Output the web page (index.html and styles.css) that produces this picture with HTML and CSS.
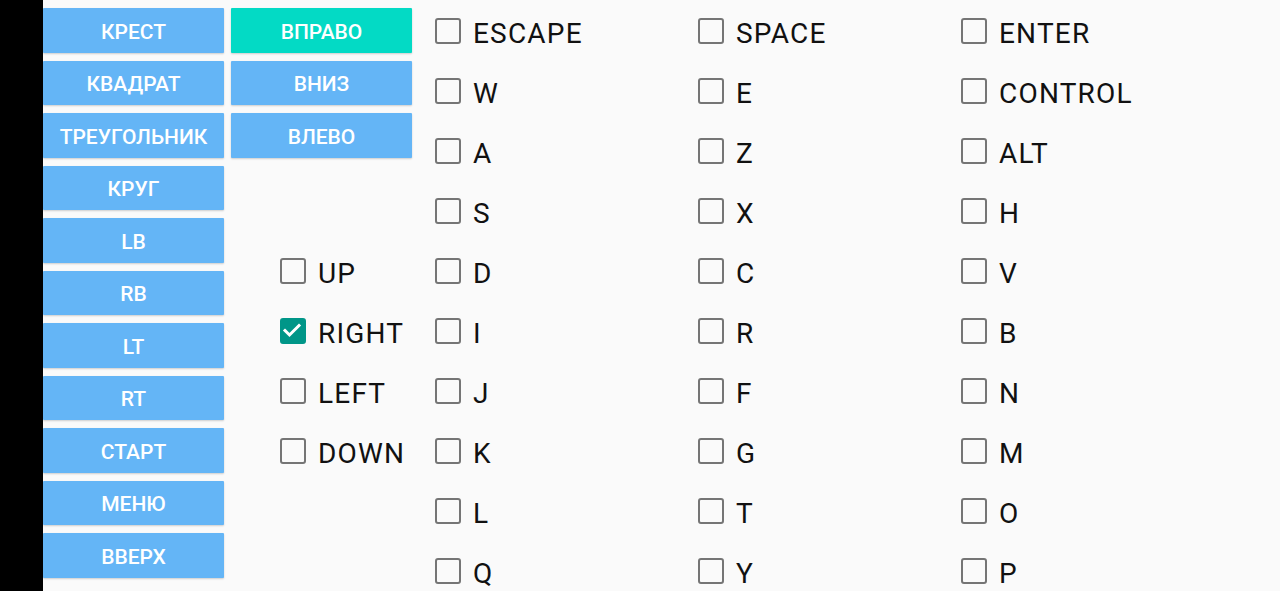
FILE: index.html
```html
<!DOCTYPE html>
<html>
<head>
<meta charset="utf-8">
<link rel="stylesheet" href="styles.css">
</head>
<body>
<div class="screen">
  <div class="edge"></div>
  <div class="col col-buttons">
    <div class="btn">КРЕСТ</div>
    <div class="btn">КВАДРАТ</div>
    <div class="btn">ТРЕУГОЛЬНИК</div>
    <div class="btn">КРУГ</div>
    <div class="btn">LB</div>
    <div class="btn">RB</div>
    <div class="btn">LT</div>
    <div class="btn">RT</div>
    <div class="btn">СТАРТ</div>
    <div class="btn">МЕНЮ</div>
    <div class="btn">ВВЕРХ</div>
  </div>
  <div class="col col-dirs">
    <div class="btn btn-active">ВПРАВО</div>
    <div class="btn">ВНИЗ</div>
    <div class="btn">ВЛЕВО</div>
    <div class="dir-checks">
      <div class="chk"><span class="box"></span><span class="lbl">UP</span></div>
      <div class="chk"><span class="box checked"><svg viewBox="0 0 26 26" width="26" height="26"><polyline points="6,13.5 10.5,18 20,8.5" fill="none" stroke="#fff" stroke-width="3" stroke-linecap="square"/></svg></span><span class="lbl">RIGHT</span></div>
      <div class="chk"><span class="box"></span><span class="lbl">LEFT</span></div>
      <div class="chk"><span class="box"></span><span class="lbl">DOWN</span></div>
    </div>
  </div>
  <div class="keys">
    <div class="chk"><span class="box"></span><span class="lbl">ESCAPE</span></div>
    <div class="chk"><span class="box"></span><span class="lbl">SPACE</span></div>
    <div class="chk"><span class="box"></span><span class="lbl">ENTER</span></div>
    <div class="chk"><span class="box"></span><span class="lbl">W</span></div>
    <div class="chk"><span class="box"></span><span class="lbl">E</span></div>
    <div class="chk"><span class="box"></span><span class="lbl">CONTROL</span></div>
    <div class="chk"><span class="box"></span><span class="lbl">A</span></div>
    <div class="chk"><span class="box"></span><span class="lbl">Z</span></div>
    <div class="chk"><span class="box"></span><span class="lbl">ALT</span></div>
    <div class="chk"><span class="box"></span><span class="lbl">S</span></div>
    <div class="chk"><span class="box"></span><span class="lbl">X</span></div>
    <div class="chk"><span class="box"></span><span class="lbl">H</span></div>
    <div class="chk"><span class="box"></span><span class="lbl">D</span></div>
    <div class="chk"><span class="box"></span><span class="lbl">C</span></div>
    <div class="chk"><span class="box"></span><span class="lbl">V</span></div>
    <div class="chk"><span class="box"></span><span class="lbl">I</span></div>
    <div class="chk"><span class="box"></span><span class="lbl">R</span></div>
    <div class="chk"><span class="box"></span><span class="lbl">B</span></div>
    <div class="chk"><span class="box"></span><span class="lbl">J</span></div>
    <div class="chk"><span class="box"></span><span class="lbl">F</span></div>
    <div class="chk"><span class="box"></span><span class="lbl">N</span></div>
    <div class="chk"><span class="box"></span><span class="lbl">K</span></div>
    <div class="chk"><span class="box"></span><span class="lbl">G</span></div>
    <div class="chk"><span class="box"></span><span class="lbl">M</span></div>
    <div class="chk"><span class="box"></span><span class="lbl">L</span></div>
    <div class="chk"><span class="box"></span><span class="lbl">T</span></div>
    <div class="chk"><span class="box"></span><span class="lbl">O</span></div>
    <div class="chk"><span class="box"></span><span class="lbl">Q</span></div>
    <div class="chk"><span class="box"></span><span class="lbl">Y</span></div>
    <div class="chk"><span class="box"></span><span class="lbl">P</span></div>
  </div>
</div>
</body>
</html>
```
FILE: styles.css
```css
html, body {
  margin: 0;
  padding: 0;
  background: #fafafa;
}
.screen {
  display: flex;
  width: 1280px;
  height: 591px;
  overflow: hidden;
  background: #fafafa;
  font-family: Roboto, "Liberation Sans", sans-serif;
}
.edge {
  width: 43px;
  flex: none;
  background: #000;
}
.col {
  width: 181px;
  flex: none;
  display: flex;
  flex-direction: column;
  gap: 8px;
  padding-top: 8px;
}
.col-dirs {
  margin-left: 7px;
}
.btn {
  height: 44.5px;
  box-sizing: border-box;
  padding-top: 3px;
  background: #64b5f6;
  color: #fff;
  font-weight: 500;
  font-size: 21px;
  display: flex;
  align-items: center;
  justify-content: center;
  border-radius: 1px;
  box-shadow: 0 1px 2px rgba(0,0,0,0.18);
}
.btn-active {
  background: #03dac5;
}
.dir-checks {
  margin-top: 75.5px;
  display: flex;
  flex-direction: column;
  padding-left: 49px;
}
.keys {
  display: grid;
  grid-template-columns: repeat(3, 263px);
  grid-auto-rows: 60px;
  padding-top: 1px;
  padding-left: 23px;
  align-content: start;
}
.chk {
  height: 60px;
  display: flex;
  align-items: center;
}
.box {
  width: 26px;
  height: 26px;
  box-sizing: border-box;
  border: 2.6px solid #757575;
  border-radius: 3px;
  flex: none;
  position: relative;
}
.box.checked {
  background: #009688;
  border-color: #009688;
}
.box.checked svg {
  position: absolute;
  left: -2.6px;
  top: -2.6px;
}
.lbl {
  margin-left: 12px;
  padding-top: 5px;
  font-size: 28px;
  letter-spacing: 1.2px;
  color: #111;
  line-height: 1;
}
```
